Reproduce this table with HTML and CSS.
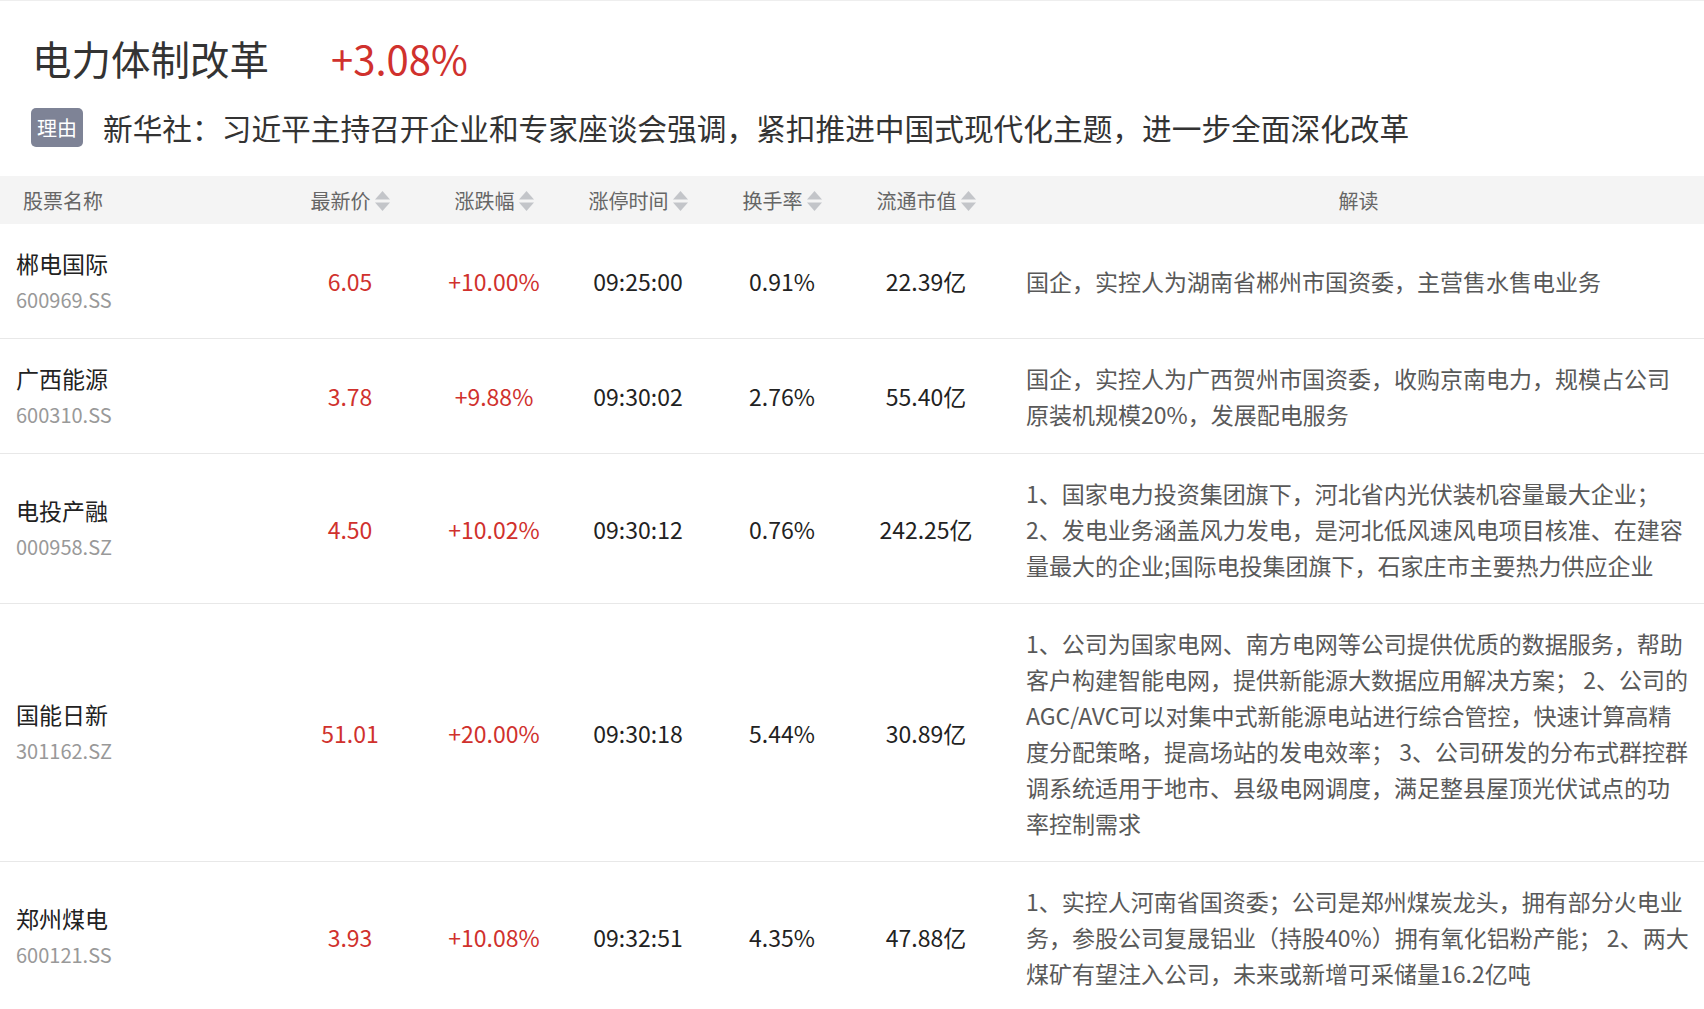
FILE: index.html
```html
<!DOCTYPE html>
<html lang="zh-CN">
<head>
<meta charset="utf-8">
<title>电力体制改革</title>
<link rel="stylesheet" href="styles.css">
</head>
<body>
<div class="page">
  <div class="topic">
    <h1 class="topic-title"><span class="topic-name">电力体制改革</span><span class="topic-change">+3.08%</span></h1>
    <div class="reason">
      <span class="reason-tag">理由</span>
      <span class="reason-text">新华社：习近平主持召开企业和专家座谈会强调，紧扣推进中国式现代化主题，进一步全面深化改革</span>
    </div>
  </div>

  <div class="table">
    <div class="row thead">
      <div class="th th-name">股票名称</div>
      <div class="th">最新价<svg class="sort" width="15" height="20" viewBox="0 0 15 20"><path d="M7.5 0L15 8.5H0Z"/><path d="M0 11.5H15L7.5 20Z"/></svg></div>
      <div class="th">涨跌幅<svg class="sort" width="15" height="20" viewBox="0 0 15 20"><path d="M7.5 0L15 8.5H0Z"/><path d="M0 11.5H15L7.5 20Z"/></svg></div>
      <div class="th">涨停时间<svg class="sort" width="15" height="20" viewBox="0 0 15 20"><path d="M7.5 0L15 8.5H0Z"/><path d="M0 11.5H15L7.5 20Z"/></svg></div>
      <div class="th">换手率<svg class="sort" width="15" height="20" viewBox="0 0 15 20"><path d="M7.5 0L15 8.5H0Z"/><path d="M0 11.5H15L7.5 20Z"/></svg></div>
      <div class="th">流通市值<svg class="sort" width="15" height="20" viewBox="0 0 15 20"><path d="M7.5 0L15 8.5H0Z"/><path d="M0 11.5H15L7.5 20Z"/></svg></div>
      <div class="th th-desc">解读</div>
    </div>

    <div class="row tr">
      <div class="td td-name"><div class="stock-name">郴电国际</div><div class="stock-code">600969.SS</div></div>
      <div class="td up">6.05</div>
      <div class="td up">+10.00%</div>
      <div class="td">09:25:00</div>
      <div class="td">0.91%</div>
      <div class="td">22.39亿</div>
      <div class="td td-desc">国企，实控人为湖南省郴州市国资委，主营售水售电业务</div>
    </div>

    <div class="row tr">
      <div class="td td-name"><div class="stock-name">广西能源</div><div class="stock-code">600310.SS</div></div>
      <div class="td up">3.78</div>
      <div class="td up">+9.88%</div>
      <div class="td">09:30:02</div>
      <div class="td">2.76%</div>
      <div class="td">55.40亿</div>
      <div class="td td-desc">国企，实控人为广西贺州市国资委，收购京南电力，规模占公司原装机规模20%，发展配电服务</div>
    </div>

    <div class="row tr">
      <div class="td td-name"><div class="stock-name">电投产融</div><div class="stock-code">000958.SZ</div></div>
      <div class="td up">4.50</div>
      <div class="td up">+10.02%</div>
      <div class="td">09:30:12</div>
      <div class="td">0.76%</div>
      <div class="td">242.25亿</div>
      <div class="td td-desc">1、国家电力投资集团旗下，河北省内光伏装机容量最大企业；<br>2、发电业务涵盖风力发电，是河北低风速风电项目核准、在建容量最大的企业;国际电投集团旗下，石家庄市主要热力供应企业</div>
    </div>

    <div class="row tr">
      <div class="td td-name"><div class="stock-name">国能日新</div><div class="stock-code">301162.SZ</div></div>
      <div class="td up">51.01</div>
      <div class="td up">+20.00%</div>
      <div class="td">09:30:18</div>
      <div class="td">5.44%</div>
      <div class="td">30.89亿</div>
      <div class="td td-desc">1、公司为国家电网、南方电网等公司提供优质的数据服务，帮助客户构建智能电网，提供新能源大数据应用解决方案； 2、公司的AGC/AVC可以对集中式新能源电站进行综合管控，快速计算高精度分配策略，提高场站的发电效率； 3、公司研发的分布式群控群调系统适用于地市、县级电网调度，满足整县屋顶光伏试点的功率控制需求</div>
    </div>

    <div class="row tr">
      <div class="td td-name"><div class="stock-name">郑州煤电</div><div class="stock-code">600121.SS</div></div>
      <div class="td up">3.93</div>
      <div class="td up">+10.08%</div>
      <div class="td">09:32:51</div>
      <div class="td">4.35%</div>
      <div class="td">47.88亿</div>
      <div class="td td-desc">1、实控人河南省国资委；公司是郑州煤炭龙头，拥有部分火电业务，参股公司复晟铝业（持股40%）拥有氧化铝粉产能； 2、两大煤矿有望注入公司，未来或新增可采储量16.2亿吨</div>
    </div>
  </div>
</div>
</body>
</html>
```

FILE: styles.css
```css
html, body {
  margin: 0;
  padding: 0;
  background: #fff;
}

body {
  font-family: "Noto Sans CJK SC", "Noto Sans", sans-serif;
  color: #333;
}

.page {
  border-top: 1px solid #eeeeee;
}

.topic {
  padding: 33px 31px 29px 31px;
}

.topic-title {
  margin: 0;
  display: flex;
  align-items: center;
  font-size: 39.5px;
  line-height: 48px;
  font-weight: 400;
  color: #333;
}

.topic-name {
  padding-left: 1px;
}

.topic-change {
  margin-left: 62px;
  font-size: 40px;
  color: #d0312d;
}

.reason {
  margin-top: 26px;
  display: flex;
  align-items: center;
  height: 39px;
}

.reason-tag {
  flex: none;
  width: 52px;
  height: 39px;
  border-radius: 5px;
  background: #7e8396;
  color: #fff;
  font-size: 20px;
  display: flex;
  align-items: center;
  justify-content: center;
}

.reason-text {
  margin-left: 20px;
  font-size: 29.7px;
  line-height: 39px;
  color: #333;
  white-space: nowrap;
}

.row {
  display: grid;
  grid-template-columns: 278px repeat(5, 144px) 1fr;
  align-items: center;
}

.thead {
  height: 48px;
  background: #f4f4f4;
  font-size: 20px;
  color: #666;
}

.th {
  display: flex;
  align-items: center;
  justify-content: center;
  gap: 4px;
  line-height: 28px;
  padding-top: 1px;
}

.th-name {
  justify-content: flex-start;
  padding-left: 23px;
}

.th-desc {
  padding: 1px 13px 0 28px;
}

.sort {
  flex: none;
  fill: #c3c5c9;
}

.tr {
  border-bottom: 1px solid #e8e8e8;
}

.td {
  text-align: center;
  font-size: 23px;
  line-height: 36px;
  color: #222;
}

.td.up {
  color: #d0312d;
}

.td-name {
  text-align: left;
  padding: 20.5px 0 20.5px 16px;
}

.stock-name {
  font-size: 23px;
  line-height: 36px;
  color: #222;
}

.stock-code {
  font-size: 20px;
  line-height: 37px;
  color: #999;
}

.td-desc {
  text-align: left;
  padding: 20.5px 13px 20.5px 28px;
  color: #595959;
}
```
